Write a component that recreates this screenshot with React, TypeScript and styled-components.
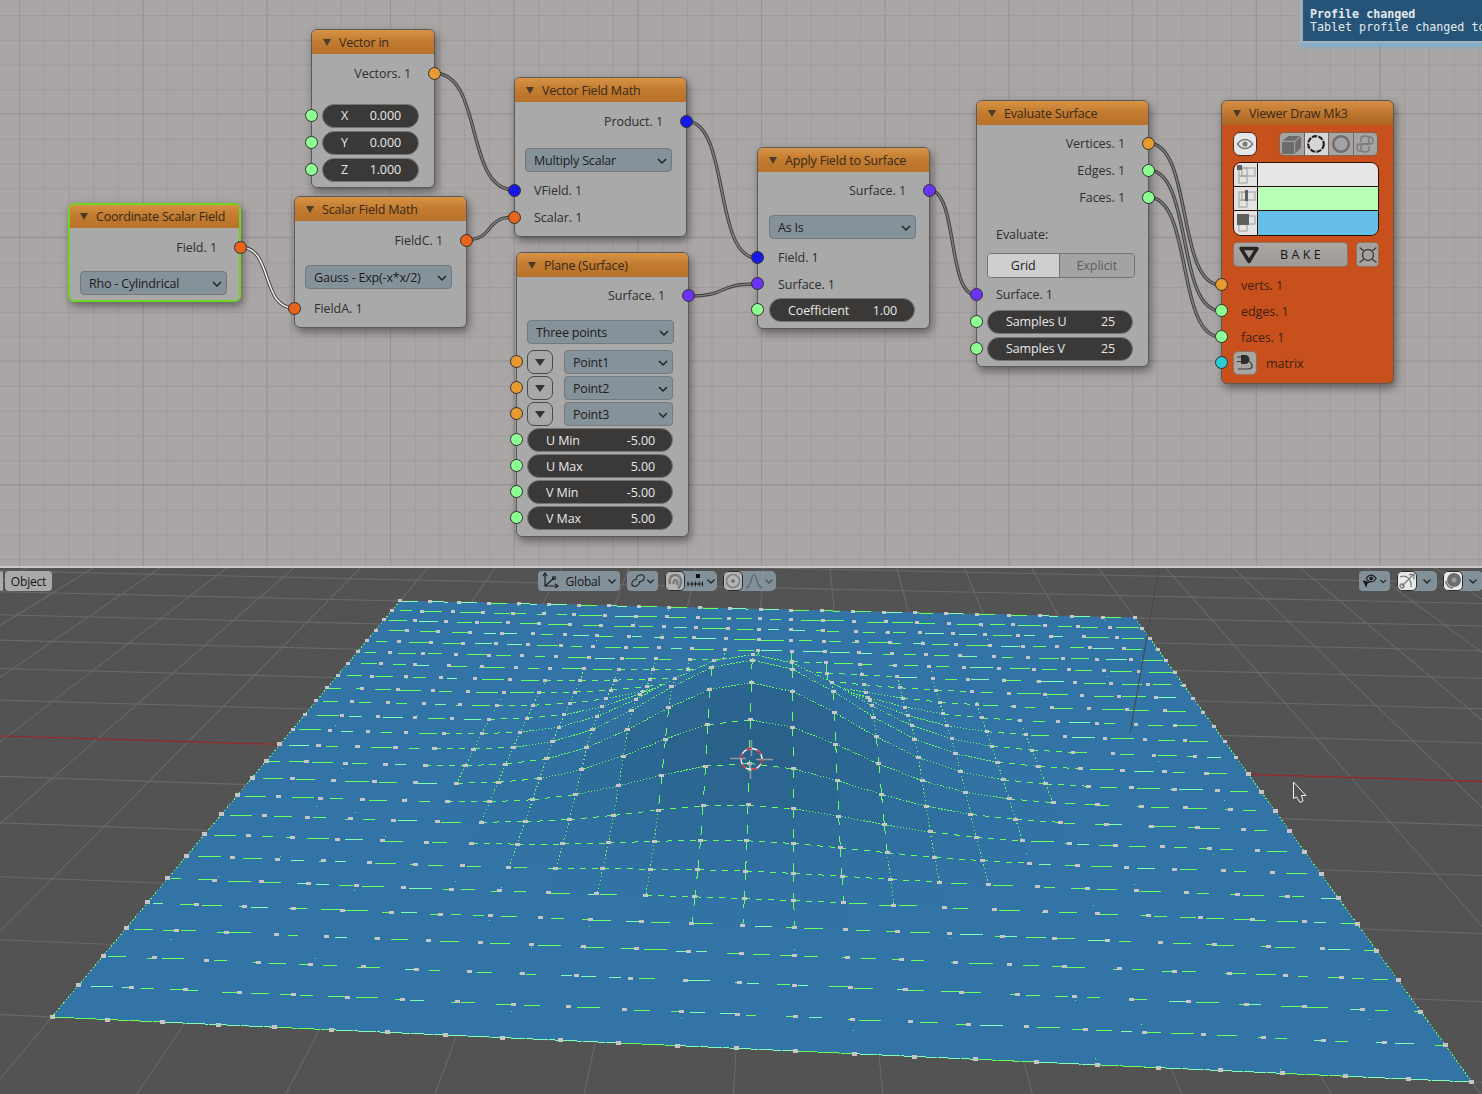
import React from 'react';
import styled, { createGlobalStyle } from 'styled-components';

const GlobalStyle = createGlobalStyle`
    html, body {
        margin: 0;
        padding: 0;
        background: #535353;
    }
    #root {
        width: 1482px;
        height: 1094px;
        overflow: hidden;
    }
`;

const Styled = {
    Page: styled.div`
        width: 1482px;
        height: 1094px;
        display: flex;
        flex-direction: column;
        font-family: "Open Sans", "Noto Sans", sans-serif;
        font-size: 12.5px;
        letter-spacing: -0.2px;
        color: #2e2e2e;
    `,
    Editor: styled.div`
        position: relative;
        height: 566px;
        flex: none;
        overflow: hidden;
        background-color: #aaa6a5;
        background-image:
            linear-gradient(to right, #989493 1px, transparent 1px),
            linear-gradient(to bottom, #989493 1px, transparent 1px),
            linear-gradient(to right, #9f9b9a 1px, transparent 1px),
            linear-gradient(to bottom, #9f9b9a 1px, transparent 1px);
        background-size: 123.7px 123.7px, 123.7px 123.7px, 24.74px 24.74px, 24.74px 24.74px;
        background-position: 19px 113px, 19px 113px, 19px 15px, 19px 15px;
    `,
    Separator: styled.div`
        height: 2px;
        flex: none;
        background: #c9c6c5;
    `,
    WireLayer: styled.svg`
        position: absolute;
        inset: 0;
    `,
    Toast: styled.div`
        position: absolute;
        top: 0;
        left: 1302px;
        right: 0;
        height: 41px;
        padding: 8px 0 0 7px;
        box-sizing: border-box;
        background: #265478;
        border-left: 1px solid #9da5aa;
        outline: 2px solid #a7b0b6;
        box-shadow: 0 4px 5px 1px #6fb2dc;
        font-family: "DejaVu Sans Mono", "Liberation Mono", monospace;
        font-size: 11.67px;
        letter-spacing: 0;
        line-height: 13px;
        color: #e4eaee;
        white-space: nowrap;
        overflow: hidden;
    `,
    ToastTitle: styled.div`
        font-weight: bold;
    `,
    Node: styled.div<{ $x: number; $y: number; $w: number; $active?: boolean; $tone?: string }>`
        position: absolute;
        left: ${p => p.$x}px;
        top: ${p => p.$y}px;
        width: ${p => p.$w}px;
        box-sizing: border-box;
        border: ${p => (p.$active ? '1px solid #6fd41f' : '1px solid #5a5a5a')};
        outline: ${p => (p.$active ? '1px solid #6fd41f' : 'none')};
        outline-offset: -2px;
        border-radius: 6px;
        background: ${p => p.$tone || '#a9a9a9'};
        box-shadow: 2px 4px 8px rgba(0, 0, 0, 0.42);
    `,
    NodeHead: styled.div<{ $muted?: boolean }>`
        height: 24px;
        display: flex;
        align-items: center;
        gap: 8px;
        padding-left: 11px;
        border-radius: 5px 5px 0 0;
        background: ${p => (p.$muted
            ? 'linear-gradient(#d48f45 0, #c37a33 45%, #a9651f 100%)'
            : 'linear-gradient(#d89345 0, #c27b30 50%, #b87229 100%)')};
        color: #37291a;
        white-space: nowrap;
    `,
    Caret: styled.i`
        width: 0;
        height: 0;
        border-left: 4px solid transparent;
        border-right: 4px solid transparent;
        border-top: 7px solid #4b3c2a;
    `,
    NodeBody: styled.div<{ $pad?: number }>`
        display: flex;
        flex-direction: column;
        padding: 5px 0 ${p => p.$pad ?? 5}px;
    `,
    Row: styled.div<{ $h?: number; $mt?: number; $right?: boolean; $pl?: number }>`
        position: relative;
        height: ${p => p.$h ?? 27}px;
        margin-top: ${p => p.$mt ?? 0}px;
        display: flex;
        align-items: center;
        justify-content: ${p => (p.$right ? 'flex-end' : 'flex-start')};
        padding: ${p => (p.$right ? '0 23px 0 0' : `0 0 0 ${p.$pl ?? 10}px`)};
        letter-spacing: -0.05px;
        white-space: nowrap;
    `,
    Socket: styled.i<{ $color: string; $right?: boolean }>`
        position: absolute;
        top: 50%;
        ${p => (p.$right ? 'right: -7px;' : 'left: -7px;')}
        width: 11px;
        height: 11px;
        margin-top: -7px;
        border-radius: 50%;
        border: 1px solid #2f2f2f;
        background: ${p => p.$color};
    `,
    Number: styled.div<{ $w: number }>`
        width: ${p => p.$w}px;
        height: 24px;
        box-sizing: border-box;
        display: flex;
        align-items: center;
        justify-content: space-between;
        padding: 0 17px 0 18px;
        border-radius: 12px;
        border: 1px solid #757575;
        background: #3a3938;
        color: #e8e8e8;
        letter-spacing: -0.1px;
    `,
    Select: styled.div<{ $w: number; $ml?: number }>`
        position: relative;
        width: ${p => p.$w}px;
        height: 24px;
        margin-left: ${p => p.$ml ?? 0}px;
        box-sizing: border-box;
        display: flex;
        align-items: center;
        padding-left: 8px;
        border-radius: 4px;
        border: 1px solid #74797d;
        background: #86929a;
        color: #1c1c1c;
        letter-spacing: -0.2px;
    `,
    Chevron: styled.svg`
        position: absolute;
        right: 3px;
        top: 8px;
    `,
    ArrowButton: styled.div`
        width: 26px;
        height: 24px;
        box-sizing: border-box;
        display: flex;
        align-items: center;
        justify-content: center;
        border-radius: 7px;
        border: 1px solid #4a4a4a;
        background: #a8a8a8;
    `,
    ArrowMark: styled.i`
        width: 0;
        height: 0;
        border-left: 5px solid transparent;
        border-right: 5px solid transparent;
        border-top: 7px solid #333;
    `,
    Tabs: styled.div`
        width: 148px;
        height: 25px;
        display: flex;
        box-sizing: border-box;
        border: 1px solid #747474;
        border-radius: 4px;
        overflow: hidden;
    `,
    Tab: styled.div<{ $on?: boolean; $w: number }>`
        width: ${p => p.$w}px;
        display: flex;
        align-items: center;
        justify-content: center;
        background: ${p => (p.$on ? '#cfcfcf' : '#a3a3a3')};
        color: ${p => (p.$on ? '#1d1d1d' : '#5c5c5c')};
        border-right: ${p => (p.$on ? '1px solid #747474' : 'none')};
    `,
    ViewerTools: styled.div`
        height: 24px;
        margin: 7px 0 0 11px;
        display: flex;
        justify-content: space-between;
        width: 145px;
    `,
    EyeButton: styled.div`
        width: 24px;
        height: 24px;
        box-sizing: border-box;
        display: flex;
        align-items: center;
        justify-content: center;
        border-radius: 7px;
        border: 1px solid #4d2d1e;
        background: #e6e6e6;
    `,
    IconStrip: styled.div`
        display: flex;
        height: 24px;
        box-sizing: border-box;
        border: 1px solid #85624f;
        border-radius: 5px;
        overflow: hidden;
    `,
    StripCell: styled.div<{ $on?: boolean }>`
        width: 23.5px;
        display: flex;
        align-items: center;
        justify-content: center;
        background: ${p => (p.$on ? '#d6d6d6' : '#a4a4a4')};
        border-right: 1px solid #85624f;
        &:last-child {
            border-right: none;
        }
    `,
    ColorTable: styled.div`
        width: 146px;
        margin: 6px 0 0 11px;
        box-sizing: border-box;
        border: 1px solid #241208;
        border-radius: 8px;
        overflow: hidden;
    `,
    ColorRow: styled.div`
        height: 24px;
        box-sizing: border-box;
        display: flex;
        border-bottom: 1px solid #241208;
        &:last-child {
            border-bottom: none;
        }
    `,
    ColorIcon: styled.div`
        width: 23px;
        flex: none;
        display: flex;
        align-items: center;
        justify-content: center;
        background: #e3e3e3;
        border-right: 1px solid #241208;
    `,
    Swatch: styled.div<{ $color: string }>`
        flex: 1;
        background: ${p => p.$color};
    `,
    BakeRow: styled.div`
        margin: 6px 0 0 11px;
        width: 146px;
        height: 25px;
        display: flex;
        justify-content: space-between;
    `,
    BakeButton: styled.div`
        width: 115px;
        box-sizing: border-box;
        display: flex;
        align-items: center;
        gap: 20px;
        padding-left: 4px;
        border: 1px solid #92735f;
        border-radius: 4px;
        background: linear-gradient(#aaa6a4, #9d9a98);
        color: #161616;
        font-size: 12.5px;
        letter-spacing: 3.4px;
    `,
    SquareButton: styled.div`
        width: 23px;
        box-sizing: border-box;
        display: flex;
        align-items: center;
        justify-content: center;
        border: 1px solid #92735f;
        border-radius: 4px;
        background: #a5a2a0;
    `,
    MatrixButton: styled.div`
        width: 24px;
        height: 24px;
        margin-right: 9px;
        box-sizing: border-box;
        display: flex;
        align-items: center;
        justify-content: center;
        border: 1px solid #92735f;
        border-radius: 5px;
        background: #a8a5a3;
    `,
    ViewerLabel: styled.span`
        color: #3d2015;
    `,
    Viewport: styled.div`
        position: relative;
        flex: 1;
        overflow: hidden;
        background: #535353;
    `,
    Scene: styled.svg`
        display: block;
    `,
    Toolbar: styled.div`
        position: absolute;
        top: 3px;
        left: 0;
        width: 1500px;
        height: 20px;
        display: flex;
        align-items: stretch;
        color: #161616;
        font-size: 12px;
    `,
    ToolChip: styled.div<{ $ml?: number; $w: number; $dim?: boolean }>`
        width: ${p => p.$w}px;
        margin-left: ${p => p.$ml ?? 0}px;
        flex: none;
        box-sizing: border-box;
        display: flex;
        align-items: center;
        justify-content: space-between;
        padding: 0 3px;
        border-radius: 4px;
        background: #82909a;
        opacity: ${p => (p.$dim ? 0.72 : 1)};
    `,
    ToolPlain: styled.div<{ $ml?: number; $w: number }>`
        width: ${p => p.$w}px;
        margin-left: ${p => p.$ml ?? 0}px;
        flex: none;
        box-sizing: border-box;
        display: flex;
        align-items: center;
        justify-content: center;
        border-radius: 4px;
        background: #a9a9a9;
    `,
    ToolPair: styled.div<{ $ml?: number; $w: number }>`
        width: ${p => p.$w}px;
        margin-left: ${p => p.$ml ?? 0}px;
        flex: none;
        display: flex;
        border-radius: 5px;
        overflow: hidden;
        background: #82909a;
    `,
    ToolToggle: styled.div<{ $tone: string }>`
        width: 20px;
        flex: none;
        box-sizing: border-box;
        display: flex;
        align-items: center;
        justify-content: center;
        border: 1px solid #2b2b2b;
        border-radius: 5px;
        background: ${p => p.$tone};
    `,
    ToolRest: styled.div<{ $dim?: boolean }>`
        flex: 1;
        display: flex;
        align-items: center;
        justify-content: space-evenly;
        opacity: ${p => (p.$dim ? 0.55 : 1)};
    `,
};

const COLORS = {
    vector: '#e69a30',
    scalar: '#8dff93',
    field: '#e8641b',
    vfield: '#1717e8',
    surface: '#6a33f5',
    matrix: '#2cc9d6',
};

// wire ends, page coordinates
const WIRES: Array<[number, number, number, number, boolean?]> = [
    [434, 73, 514, 190],
    [686, 121, 757, 258],
    [465, 240, 514, 217],
    [240, 247, 294, 308, true],
    [688, 296, 757, 284],
    [929, 190, 976, 295],
    [1148, 143, 1221, 285],
    [1148, 170, 1221, 311],
    [1148, 197, 1221, 337],
];

const wirePath = (x1: number, y1: number, x2: number, y2: number) => {
    const d = (x2 - x1) * 0.62;
    return `M${x1} ${y1}C${x1 + d} ${y1} ${x2 - d} ${y2} ${x2} ${y2}`;
};

const Wires = () => (
    <Styled.WireLayer width={1482} height={566}>
        {WIRES.map(([a, b, c, d]) => (
            <path key={`o${a}${b}`} d={wirePath(a, b, c, d)} fill="none" stroke="#3d3d3d" strokeWidth={3.4} />
        ))}
        {WIRES.map(([a, b, c, d, sel]) => (
            <path key={`i${a}${b}`} d={wirePath(a, b, c, d)} fill="none" stroke={sel ? '#f2f2f2' : '#7e7e7e'} strokeWidth={1.5} />
        ))}
    </Styled.WireLayer>
);

const Drop: React.FC<{ w: number; ml?: number; children: React.ReactNode }> = ({ w, ml, children }) => (
    <Styled.Select $w={w} $ml={ml}>
        {children}
        <Styled.Chevron width="12" height="8" viewBox="0 0 12 8">
            <path d="M2 2l4 4 4-4" fill="none" stroke="#222" strokeWidth="1.5" />
        </Styled.Chevron>
    </Styled.Select>
);

const Num: React.FC<{ w?: number; label: string; value: string }> = ({ w = 146, label, value }) => (
    <Styled.Number $w={w}>
        <span>{label}</span>
        <span>{value}</span>
    </Styled.Number>
);

const Head: React.FC<{ title: string; muted?: boolean }> = ({ title, muted }) => (
    <Styled.NodeHead $muted={muted}>
        <Styled.Caret />
        {title}
    </Styled.NodeHead>
);

const PointRow: React.FC<{ name: string }> = ({ name }) => (
    <Styled.Row $h={26}>
        <Styled.Socket $color={COLORS.vector} />
        <Styled.ArrowButton>
            <Styled.ArrowMark />
        </Styled.ArrowButton>
        <Drop w={109} ml={11}>{name}</Drop>
    </Styled.Row>
);

const NumRow: React.FC<{ label: string; value: string; w?: number; h?: number }> = ({ label, value, w, h = 26 }) => (
    <Styled.Row $h={h}>
        <Styled.Socket $color={COLORS.scalar} />
        <Num label={label} value={value} w={w} />
    </Styled.Row>
);

const EyeIcon = () => (
    <svg width="18" height="14" viewBox="0 0 18 14">
        <path d="M1.5 7C4 3.5 6.500 2.500 9 2.500S14 3.500 16.500 7C14 10.500 11.500 11.500 9 11.500S4 10.500 1.500 7Z" fill="none" stroke="#7a7a7a" strokeWidth="1.600" />
        <circle cx="9" cy="7" r="2.600" fill="#7a7a7a" />
    </svg>
);

const CubeIcon = () => (
    <svg width="21" height="21" viewBox="0 0 20 20">
        <path d="M1 7l6-5h12v11l-6 6H1Z" fill="#6b6b6b" />
        <path d="M1 7h12v12M13 7l6-5" fill="none" stroke="#a4a4a4" strokeWidth="1" />
    </svg>
);

const RingIcon: React.FC<{ dashed?: boolean }> = ({ dashed }) => (
    <svg width="20" height="20" viewBox="0 0 20 20">
        <circle cx="10" cy="10" r="7.800" fill="none" stroke={dashed ? '#222' : '#6f6f6f'} strokeWidth={dashed ? 2.200 : 2.600} strokeDasharray={dashed ? '5.200 1.300' : undefined} />
    </svg>
);

const PythonIcon = () => (
    <svg width="20" height="20" viewBox="0 0 20 20" fill="none" stroke="#7b7b7b" strokeWidth="1.500">
        <path d="M6 8V5c0-2 2-3 4-3s4 1 4 3v2c0 2-1 3-3 3H5c-2 0-3 1-3 3s1 4 3 4h1" />
        <path d="M14 12v3c0 2-2 3-4 3s-4-1-4-3v-2c0-2 1-3 3-3h6c2 0 3-1 3-3s-1-4-3-4h-1" />
    </svg>
);

const ElementIcon: React.FC<{ kind: 'v' | 'e' | 'f' }> = ({ kind }) => (
    <svg width="20" height="20" viewBox="0 0 20 20">
        <g fill="none" stroke="#a9a9a9" strokeWidth="1.200">
            <rect x="6" y="3" width="13" height="8" />
            <rect x="3" y="11" width="8" height="7" />
            <rect x="3" y="3" width="8" height="8" />
        </g>
        {kind === 'v' && <rect x="1" y="0" width="5" height="5" fill="#5f5f5f" />}
        {kind === 'e' && <rect x="9" y="1" width="3" height="11" fill="#5f5f5f" />}
        {kind === 'f' && <rect x="1" y="1" width="12" height="11" fill="#5f5f5f" />}
    </svg>
);

const BakeIcon = () => (
    <svg width="22" height="18" viewBox="0 0 22 18">
        <path d="M3 2.500h16L11 15.500Z" fill="none" stroke="#262626" strokeWidth="3.400" strokeLinejoin="round" />
    </svg>
);

const CrossRing = () => (
    <svg width="20" height="20" viewBox="0 0 20 20" fill="none" stroke="#3c3c3c" strokeWidth="1.300">
        <circle cx="10" cy="10" r="5.500" />
        <path d="M1.500 2.500l4.500 3.500M18.500 2.500L14 6M1.500 17.500L6 14M18.500 17.500L14 14" />
    </svg>
);

const PlugIcon = () => (
    <svg width="20" height="20" viewBox="0 0 20 20" fill="none">
        <path d="M6 2h4a4.500 4.500 0 0 1 0 9H6Z" fill="#2e2e2e" />
        <path d="M2 4h4M2 8.500h4M13 8c3 1 4 3 4 5 0 2-2 3-4 3H3" stroke="#3a3a3a" strokeWidth="1.200" />
    </svg>
);

const SmallChevron = () => (
    <svg width="10" height="7" viewBox="0 0 10 7">
        <path d="M1.500 1.500L5 5l3.500-3.500" fill="none" stroke="#222" strokeWidth="1.300" />
    </svg>
);

const AxisIcon = () => (
    <svg width="18" height="18" viewBox="0 0 18 18" fill="none" stroke="#202020" strokeWidth="1.200">
        <path d="M4 2v12h12M4 14L13 6" />
        <path d="M2 4l2-3 2 3M14 12l3 2-3 2" />
        <circle cx="13" cy="6" r="1.500" />
    </svg>
);

const LinkIcon = () => (
    <svg width="18" height="18" viewBox="0 0 18 18" fill="none" stroke="#202020" strokeWidth="1.200">
        <path d="M7 6c1-3 3-4 6-4 2 0 3 2 3 3 0 3-3 5-6 5" />
        <path d="M11 10c-1 3-3 5-6 5-2 0-3-1-3-3 0-3 3-5 6-5" />
    </svg>
);

const MagnetIcon = () => (
    <svg width="16" height="17" viewBox="0 0 16 17" fill="none" stroke="#7c7c7c" strokeWidth="2.600">
        <path d="M3 11C1.500 6 4 2 8 2s6 3 6 6-1 6-3 7" />
        <path d="M7 11c-1-2 0-4 1.500-4S11 9 10 12" />
    </svg>
);

const SnapIcon = () => (
    <svg width="18" height="16" viewBox="0 0 18 16" fill="none" stroke="#202020" strokeWidth="1">
        <path d="M1 11h16M2 8.500v5M6 8.500v5M9.500 8.500v5M13 8.500v5M16.500 8.500v5" />
        <rect x="10" y="1" width="4" height="4" fill="#111" stroke="none" />
    </svg>
);

const TargetIcon = () => (
    <svg width="16" height="16" viewBox="0 0 16 16">
        <circle cx="8" cy="8" r="6.500" fill="none" stroke="#808080" strokeWidth="1.600" />
        <circle cx="8" cy="8" r="1.800" fill="#6a6a6a" />
    </svg>
);

const FalloffIcon = () => (
    <svg width="18" height="16" viewBox="0 0 18 16">
        <path d="M1 15c5 0 5-13 8-13s3 13 8 13" fill="none" stroke="#3c3c3c" strokeWidth="1.200" />
    </svg>
);

const EyeCursorIcon = () => (
    <svg width="20" height="18" viewBox="0 0 20 18">
        <path d="M5 6c2-3 4-4 6-4s4 1 6 4c-2 3-4 4-6 4S7 9 5 6Z" fill="none" stroke="#222" strokeWidth="1.400" />
        <circle cx="11" cy="6" r="2.300" fill="#222" />
        <path d="M1 8l9 2.500-3.500 1.500L5 17Z" fill="#141414" />
    </svg>
);

const GizmoIcon = () => (
    <svg width="18" height="18" viewBox="0 0 18 18" fill="none" stroke="#7d7d7d" strokeWidth="1.300">
        <path d="M2 5c6-3 12 2 11 10M4 14L15 3M11 2.500h5v5" />
        <circle cx="4" cy="14" r="2" />
    </svg>
);

const SphereIcon = () => (
    <svg width="18" height="18" viewBox="0 0 18 18">
        <circle cx="10" cy="8" r="7" fill="#6d6d6d" />
        <circle cx="10" cy="8" r="2.500" fill="#9a9a9a" />
        <path d="M2 9c0 4 3 7 7 7" fill="none" stroke="#777" strokeWidth="1.600" />
    </svg>
);

// plane corners on screen: back left, back right, front right, front left
const Q = [[400, 601], [1135, 618], [1472, 1082], [52, 1017]];

const makeHomography = () => {
    const [[x0, y0], [x1, y1], [x2, y2], [x3, y3]] = Q;
    const dx1 = x1 - x2, dx2 = x3 - x2, sx = x0 - x1 + x2 - x3;
    const dy1 = y1 - y2, dy2 = y3 - y2, sy = y0 - y1 + y2 - y3;
    const det = dx1 * dy2 - dx2 * dy1;
    const g = (sx * dy2 - dx2 * sy) / det;
    const h = (dx1 * sy - sx * dy1) / det;
    const a = x1 - x0 + g * x1, b = x3 - x0 + h * x3;
    const d = y1 - y0 + g * y1, e = y3 - y0 + h * y3;
    return (s: number, t: number) => {
        const w = g * s + h * t + 1;
        return { x: (a * s + b * t + x0) / w, y: (d * s + e * t + y0) / w, w };
    };
};

const project = makeHomography();
const centerW = project(0.5, 0.5).w;
const N = 24;

let seed = 20240;
const rnd = () => {
    seed = (seed * 16807) % 2147483647;
    return seed / 2147483647;
};

const height = (i: number, j: number) => {
    const u = -5 + (10 * i) / N;
    const v = -5 + (10 * j) / N;
    return Math.exp(-(u * u + v * v) / 2);
};

const vertex = (i: number, j: number) => {
    const p = project(i / N, j / N);
    const z = height(i, j);
    return { x: p.x, y: p.y - 99 * z * (centerW / p.w), z };
};

const groundLines = () => {
    const lines: Array<[number, number, number, number]> = [];
    const span = (fn: (k: number) => { x: number; y: number; w: number }) => {
        let first = null;
        let last = null;
        for (let k = -30; k <= 30; k += 0.04) {
            const p = fn(k);
            if (p.w > 0.22) {
                if (!first) first = p;
                last = p;
            }
        }
        if (first && last) lines.push([first.x, first.y, last.x, last.y]);
    };
    for (let n = -40; n <= 40; n++) {
        const c = (n + 5) / 10;
        span(k => project(c, k));
        span(k => project(k, c));
    }
    return lines;
};

const GREEN = '#66ff5c';
const TEAL = '#7dffb4';

const buildMesh = () => {
    const out: React.ReactElement[] = [];
    let key = 0;
    const order: number[] = [];
    for (let i = 0; i < N; i++) order.push(i);
    order.sort((a, b) => Math.abs(b + 0.5 - N / 2) - Math.abs(a + 0.5 - N / 2));

    const edgeLine = (
        a: { x: number; y: number },
        b: { x: number; y: number },
        color: string,
        dash?: string,
    ) => (
        <line key={key++} x1={a.x} y1={a.y} x2={b.x} y2={b.y} stroke={color} strokeWidth={1} strokeDasharray={dash} />
    );

    for (let j = 0; j <= N; j++) {
        if (j < N) {
            for (const i of order) {
                const a = vertex(i, j), b = vertex(i + 1, j), c = vertex(i + 1, j + 1), d = vertex(i, j + 1);
                const slopeV = (a.z + b.z - c.z - d.z) * 0.5 * 2.4;
                const slopeU = Math.abs(a.z + d.z - b.z - c.z) * 0.5 * 2.4;
                const f = 1 - 0.27 * Math.max(0, slopeV) - 0.05 * slopeU + 0.02 * Math.max(0, -slopeV);
                const fill = `rgb(${Math.round(50 * f)},${Math.round(116 * f)},${Math.round(166 * f)})`;
                out.push(
                    <polygon
                        key={key++}
                        points={`${a.x},${a.y} ${b.x},${b.y} ${c.x},${c.y} ${d.x},${d.y}`}
                        fill={fill}
                        stroke={fill}
                        strokeWidth={0.7}
                    />,
                );
            }
        }
        for (let i = 0; i <= N; i++) {
            const v = vertex(i, j);
            if (i < N) {
                const r = vertex(i + 1, j);
                const flat = v.z < 0.012 && r.z < 0.012;
                const border = j === 0 || j === N;
                if (border) {
                    out.push(edgeLine(v, r, rnd() > 0.5 ? GREEN : TEAL, j === N ? '22 1' : '18 12'));
                } else if (flat) {
                    // z-fighting breaks flat rows into loose dashes of one pixel row
                    const edge = r.x - v.x;
                    let at = rnd() * 14;
                    while (at < edge) {
                        const len = 10 + rnd() * 14;
                        const t0 = at / edge;
                        const t1 = Math.min(1, (at + len) / edge);
                        const y = Math.round(v.y + (r.y - v.y) * t0) + 0.5;
                        out.push(
                            edgeLine(
                                { x: v.x + edge * t0, y },
                                { x: v.x + edge * t1, y },
                                rnd() > 0.8 ? TEAL : GREEN,
                            ),
                        );
                        at += len + 9 + rnd() * 22;
                    }
                } else {
                    const steep = Math.abs((r.y - v.y) / (r.x - v.x));
                    out.push(edgeLine(v, r, GREEN, steep > 0.13 ? '1.400 1.700' : '6 6'));
                }
            }
            if (j < N) {
                const f = vertex(i, j + 1);
                if (i === 0 || i === N) {
                    out.push(edgeLine(v, f, GREEN, '1.500 2.200'));
                } else if (v.z < 0.012 && f.z < 0.012) {
                    if (rnd() > 0.82) {
                        const t = rnd();
                        out.push(
                            <rect key={key++} x={v.x + (f.x - v.x) * t} y={v.y + (f.y - v.y) * t} width={1} height={1} fill={GREEN} />,
                        );
                    }
                } else {
                    const lean = Math.abs((f.x - v.x) / (f.y - v.y));
                    out.push(edgeLine(v, f, GREEN, lean < 0.12 ? '9 11' : '1.300 2.600'));
                }
            }
        }
        for (let i = 0; i <= N; i++) {
            const v = vertex(i, j);
            const outer = i === 0 || i === N || j === 0 || j === N;
            const w = 4 + Math.round(j / N);
            const h = outer ? 3 + Math.round(j / N) : 3;
            out.push(
                <rect key={key++} x={Math.round(v.x - w / 2)} y={Math.round(v.y - h / 2)} width={w} height={h} fill="#c6c6c6" />,
            );
        }
    }
    return out;
};

const GROUND = groundLines();
const MESH = buildMesh();
const axisX = [project(-6, 0.5), project(6, 0.5)];
const axisY = [project(0.5, -0.55), project(0.5, 6)];

const Crosshair = () => (
    <g>
        <g stroke="#8d9aa5" strokeWidth="1.500">
            <path d="M730 758.500h16M756 759.500h17M751.500 740v16M750.500 763v16" />
        </g>
        <circle cx="751.500" cy="759" r="10.500" fill="none" stroke="#f2f2f2" strokeWidth="1.300" />
        <circle cx="751.500" cy="759" r="10.500" fill="none" stroke="#e01818" strokeWidth="1.300" strokeDasharray="5.500 5.500" />
    </g>
);

const Scene = () => (
    <Styled.Scene width={1482} height={526} viewBox="0 568 1482 526">
        <g stroke="#696969" strokeWidth="1.100">
            {GROUND.map(([a, b, c, d], n) => (
                <line key={n} x1={a} y1={b} x2={c} y2={d} />
            ))}
        </g>
        <line x1={axisX[0].x} y1={axisX[0].y} x2={axisX[1].x} y2={axisX[1].y} stroke="#8f2a2a" strokeWidth="1.400" />
        <line x1={axisY[0].x} y1={axisY[0].y} x2={axisY[1].x} y2={axisY[1].y} stroke="#2d8a34" strokeWidth="1.200" />
        <g shapeRendering="crispEdges">{MESH}</g>
        <line x1="1159" y1="568" x2="1130" y2="733" stroke="#45484b" strokeWidth="1.100" />
        <Crosshair />
        <path d="M1293.500 782v16.500l3-1.500 3.500 5.500 3-1.500-1.500-5.500h4.500Z" fill="#535353" stroke="#eeeeee" strokeWidth="1" />
    </Styled.Scene>
);

const Toolbar = () => (
    <Styled.Toolbar>
        <Styled.ToolPlain $w={3}> </Styled.ToolPlain>
        <Styled.ToolPlain $w={47} $ml={2}>Object</Styled.ToolPlain>
        <Styled.ToolChip $w={82} $ml={486}>
            <AxisIcon />
            <span>Global</span>
            <SmallChevron />
        </Styled.ToolChip>
        <Styled.ToolChip $w={31} $ml={7}>
            <LinkIcon />
            <SmallChevron />
        </Styled.ToolChip>
        <Styled.ToolPair $w={52} $ml={7}>
            <Styled.ToolToggle $tone="#b4b4b4"><MagnetIcon /></Styled.ToolToggle>
            <Styled.ToolRest>
                <SnapIcon />
                <SmallChevron />
            </Styled.ToolRest>
        </Styled.ToolPair>
        <Styled.ToolPair $w={53} $ml={6}>
            <Styled.ToolToggle $tone="#b4b4b4"><TargetIcon /></Styled.ToolToggle>
            <Styled.ToolRest $dim>
                <FalloffIcon />
                <SmallChevron />
            </Styled.ToolRest>
        </Styled.ToolPair>
        <Styled.ToolChip $w={31} $ml={583}>
            <EyeCursorIcon />
            <SmallChevron />
        </Styled.ToolChip>
        <Styled.ToolPair $w={40} $ml={7}>
            <Styled.ToolToggle $tone="#e8e8e8"><GizmoIcon /></Styled.ToolToggle>
            <Styled.ToolRest><SmallChevron /></Styled.ToolRest>
        </Styled.ToolPair>
        <Styled.ToolPair $w={40} $ml={6}>
            <Styled.ToolToggle $tone="#e8e8e8"><SphereIcon /></Styled.ToolToggle>
            <Styled.ToolRest><SmallChevron /></Styled.ToolRest>
        </Styled.ToolPair>
    </Styled.Toolbar>
);

const App: React.FC = () => (
    <Styled.Page>
        <GlobalStyle />
        <Styled.Editor>
            <Wires />

            <Styled.Node $x={311} $y={29} $w={124}>
                <Head title="Vector in" />
                <Styled.NodeBody $pad={4}>
                    <Styled.Row $right $mt={1}>Vectors. 1<Styled.Socket $color={COLORS.vector} $right /></Styled.Row>
                    <Styled.Row $mt={15}><Styled.Socket $color={COLORS.scalar} /><Num w={97} label="X" value="0.000" /></Styled.Row>
                    <Styled.Row><Styled.Socket $color={COLORS.scalar} /><Num w={97} label="Y" value="0.000" /></Styled.Row>
                    <Styled.Row><Styled.Socket $color={COLORS.scalar} /><Num w={97} label="Z" value="1.000" /></Styled.Row>
                </Styled.NodeBody>
            </Styled.Node>

            <Styled.Node $x={68} $y={203} $w={173} $active>
                <Head title="Coordinate Scalar Field" />
                <Styled.NodeBody>
                    <Styled.Row $right $mt={1}>Field. 1<Styled.Socket $color={COLORS.field} $right /></Styled.Row>
                    <Styled.Row $h={26} $mt={9} $pl={11}><Drop w={147}>Rho - Cylindrical</Drop></Styled.Row>
                </Styled.NodeBody>
            </Styled.Node>

            <Styled.Node $x={294} $y={196} $w={173}>
                <Head title="Scalar Field Math" />
                <Styled.NodeBody>
                    <Styled.Row $right $mt={1}>FieldC. 1<Styled.Socket $color={COLORS.field} $right /></Styled.Row>
                    <Styled.Row $h={26} $mt={10}><Drop w={147}>Gauss - Exp(-x*x/2)</Drop></Styled.Row>
                    <Styled.Row $mt={5} $pl={19}><Styled.Socket $color={COLORS.field} />FieldA. 1</Styled.Row>
                </Styled.NodeBody>
            </Styled.Node>

            <Styled.Node $x={514} $y={77} $w={173}>
                <Head title="Vector Field Math" />
                <Styled.NodeBody>
                    <Styled.Row $right $mt={1}>Product. 1<Styled.Socket $color={COLORS.vfield} $right /></Styled.Row>
                    <Styled.Row $h={26} $mt={12}><Drop w={147}>Multiply Scalar</Drop></Styled.Row>
                    <Styled.Row $mt={4} $pl={19}><Styled.Socket $color={COLORS.vfield} />VField. 1</Styled.Row>
                    <Styled.Row $pl={19}><Styled.Socket $color={COLORS.field} />Scalar. 1</Styled.Row>
                </Styled.NodeBody>
            </Styled.Node>

            <Styled.Node $x={516} $y={252} $w={173}>
                <Head title="Plane (Surface)" />
                <Styled.NodeBody>
                    <Styled.Row $right>Surface. 1<Styled.Socket $color={COLORS.surface} $right /></Styled.Row>
                    <Styled.Row $h={26} $mt={10}><Drop w={147}>Three points</Drop></Styled.Row>
                    <Styled.Row $h={4} />
                    <PointRow name="Point1" />
                    <PointRow name="Point2" />
                    <PointRow name="Point3" />
                    <NumRow label="U Min" value="-5.00" />
                    <NumRow label="U Max" value="5.00" />
                    <NumRow label="V Min" value="-5.00" />
                    <NumRow label="V Max" value="5.00" />
                </Styled.NodeBody>
            </Styled.Node>

            <Styled.Node $x={757} $y={147} $w={173}>
                <Head title="Apply Field to Surface" />
                <Styled.NodeBody>
                    <Styled.Row $right>Surface. 1<Styled.Socket $color={COLORS.surface} $right /></Styled.Row>
                    <Styled.Row $h={26} $mt={10} $pl={11}><Drop w={147}>As Is</Drop></Styled.Row>
                    <Styled.Row $mt={4} $pl={20}><Styled.Socket $color={COLORS.vfield} />Field. 1</Styled.Row>
                    <Styled.Row $h={26} $pl={20}><Styled.Socket $color={COLORS.surface} />Surface. 1</Styled.Row>
                    <Styled.Row $h={26} $pl={11}><Styled.Socket $color={COLORS.scalar} /><Num label="Coefficient" value="1.00" /></Styled.Row>
                </Styled.NodeBody>
            </Styled.Node>

            <Styled.Node $x={976} $y={100} $w={173}>
                <Head title="Evaluate Surface" />
                <Styled.NodeBody $pad={4}>
                    <Styled.Row $right>Vertices. 1<Styled.Socket $color={COLORS.vector} $right /></Styled.Row>
                    <Styled.Row $right>Edges. 1<Styled.Socket $color={COLORS.scalar} $right /></Styled.Row>
                    <Styled.Row $right>Faces. 1<Styled.Socket $color={COLORS.scalar} $right /></Styled.Row>
                    <Styled.Row $h={26} $mt={10} $pl={19}>Evaluate:</Styled.Row>
                    <Styled.Row $h={26} $mt={5}>
                        <Styled.Tabs>
                            <Styled.Tab $on $w={72}>Grid</Styled.Tab>
                            <Styled.Tab $w={76}>Explicit</Styled.Tab>
                        </Styled.Tabs>
                    </Styled.Row>
                    <Styled.Row $mt={3} $pl={19}><Styled.Socket $color={COLORS.surface} />Surface. 1</Styled.Row>
                    <NumRow h={27} label="Samples U" value="25" />
                    <NumRow h={27} label="Samples V" value="25" />
                </Styled.NodeBody>
            </Styled.Node>

            <Styled.Node $x={1221} $y={100} $w={173} $tone="#c8501c">
                <Head title="Viewer Draw Mk3" muted />
                <Styled.ViewerTools>
                    <Styled.EyeButton><EyeIcon /></Styled.EyeButton>
                    <Styled.IconStrip>
                        <Styled.StripCell><CubeIcon /></Styled.StripCell>
                        <Styled.StripCell $on><RingIcon dashed /></Styled.StripCell>
                        <Styled.StripCell><RingIcon /></Styled.StripCell>
                        <Styled.StripCell><PythonIcon /></Styled.StripCell>
                    </Styled.IconStrip>
                </Styled.ViewerTools>
                <Styled.ColorTable>
                    <Styled.ColorRow>
                        <Styled.ColorIcon><ElementIcon kind="v" /></Styled.ColorIcon>
                        <Styled.Swatch $color="#e6e6e6" />
                    </Styled.ColorRow>
                    <Styled.ColorRow>
                        <Styled.ColorIcon><ElementIcon kind="e" /></Styled.ColorIcon>
                        <Styled.Swatch $color="#b9ffb6" />
                    </Styled.ColorRow>
                    <Styled.ColorRow>
                        <Styled.ColorIcon><ElementIcon kind="f" /></Styled.ColorIcon>
                        <Styled.Swatch $color="#66bfe8" />
                    </Styled.ColorRow>
                </Styled.ColorTable>
                <Styled.BakeRow>
                    <Styled.BakeButton>
                        <BakeIcon />
                        BAKE
                    </Styled.BakeButton>
                    <Styled.SquareButton><CrossRing /></Styled.SquareButton>
                </Styled.BakeRow>
                <Styled.NodeBody $pad={7}>
                    <Styled.Row $h={26} $pl={19}><Styled.Socket $color={COLORS.vector} /><Styled.ViewerLabel>verts. 1</Styled.ViewerLabel></Styled.Row>
                    <Styled.Row $h={26} $pl={19}><Styled.Socket $color={COLORS.scalar} /><Styled.ViewerLabel>edges. 1</Styled.ViewerLabel></Styled.Row>
                    <Styled.Row $h={26} $pl={19}><Styled.Socket $color={COLORS.scalar} /><Styled.ViewerLabel>faces. 1</Styled.ViewerLabel></Styled.Row>
                    <Styled.Row $h={26} $pl={11}>
                        <Styled.Socket $color={COLORS.matrix} />
                        <Styled.MatrixButton><PlugIcon /></Styled.MatrixButton>
                        <Styled.ViewerLabel>matrix</Styled.ViewerLabel>
                    </Styled.Row>
                </Styled.NodeBody>
            </Styled.Node>

            <Styled.Toast>
                <Styled.ToastTitle>Profile changed</Styled.ToastTitle>
                Tablet profile changed to
            </Styled.Toast>
        </Styled.Editor>
        <Styled.Separator />
        <Styled.Viewport>
            <Scene />
            <Toolbar />
        </Styled.Viewport>
    </Styled.Page>
);

export default App;
